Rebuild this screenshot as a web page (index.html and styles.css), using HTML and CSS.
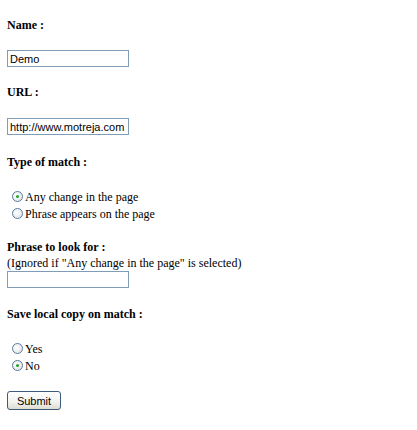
FILE: index.html
```html
<!DOCTYPE html>
<html lang="en">
<head>
    <meta charset="UTF-8">
    <title>Page Monitor - Add</title>
    <link rel="stylesheet" href="styles.css">
</head>
<body>

<form class="monitor-form">
    <p class="label first">Name :</p>
    <input class="text-box" type="text" value="Demo">

    <p class="label">URL :</p>
    <input class="text-box url-box" type="text" value="http://www.motreja.com">

    <p class="label type-label">Type of match :</p>
    <div class="radio-group">
        <label class="radio-row"><input type="radio" name="match" checked>Any change in the page</label>
        <label class="radio-row"><input type="radio" name="match">Phrase appears on the page</label>
    </div>

    <p class="label phrase-label">Phrase to look for :</p>
    <p class="note">(Ignored if "Any change in the page" is selected)</p>
    <input class="text-box phrase-box" type="text" value="">

    <p class="label save-label">Save local copy on match :</p>
    <div class="radio-group">
        <label class="radio-row"><input type="radio" name="save">Yes</label>
        <label class="radio-row"><input type="radio" name="save" checked>No</label>
    </div>

    <button class="submit-btn" type="button">Submit</button>
</form>

</body>
</html>
```

FILE: styles.css
```css
body {
    margin: 0;
    padding: 0;
    background-color: #fff;
    color: #000;
    font-family: "Liberation Serif", "Times New Roman", serif;
    font-size: 12px;
    line-height: 16px;
}
.monitor-form {
    display: flex;
    flex-direction: column;
    align-items: flex-start;
    padding: 0 7px;
}
.label {
    margin: 17px 0 0 0;
    font-weight: bold;
}
.label.first {
    margin-top: 17px;
}
.type-label {
    margin-top: 19px;
}
.phrase-label {
    margin-top: 17px;
}
.save-label {
    margin-top: 18px;
}
.note {
    margin: 0;
}
.text-box {
    box-sizing: border-box;
    width: 122px;
    height: 17px;
    margin: 17px 0 0 0;
    padding: 0 2px;
    border: 1px solid #7f9db9;
    font-family: "Liberation Sans", Arial, sans-serif;
    font-size: 11px;
    color: #000;
    outline: none;
}
.url-box {
    margin-top: 18px;
}
.phrase-box {
    margin-top: 0;
}
.radio-group {
    margin-top: 18px;
}
.radio-row {
    display: flex;
    align-items: center;
    height: 17px;
}
.radio-row input {
    appearance: none;
    box-sizing: border-box;
    width: 11px;
    height: 11px;
    margin: 0 2px 0 5px;
    border: 1px solid #5b7a9c;
    border-radius: 50%;
    background: radial-gradient(circle at 40% 40%, #fff 0%, #e6e9ee 70%, #cfd6e0 100%);
    position: relative;
}
.radio-row input:checked::after {
    content: "";
    position: absolute;
    left: 3px;
    top: 3px;
    width: 3px;
    height: 3px;
    border-radius: 50%;
    background-color: #21a121;
}
.submit-btn {
    box-sizing: border-box;
    width: 54px;
    height: 19px;
    margin-top: 17px;
    padding: 0;
    border: 1px solid #3d5a7f;
    border-radius: 3px;
    background: linear-gradient(#ffffff, #f2f2ee 60%, #dedbd0);
    font-family: "Liberation Sans", Arial, sans-serif;
    font-size: 11px;
    color: #000;
}
```
